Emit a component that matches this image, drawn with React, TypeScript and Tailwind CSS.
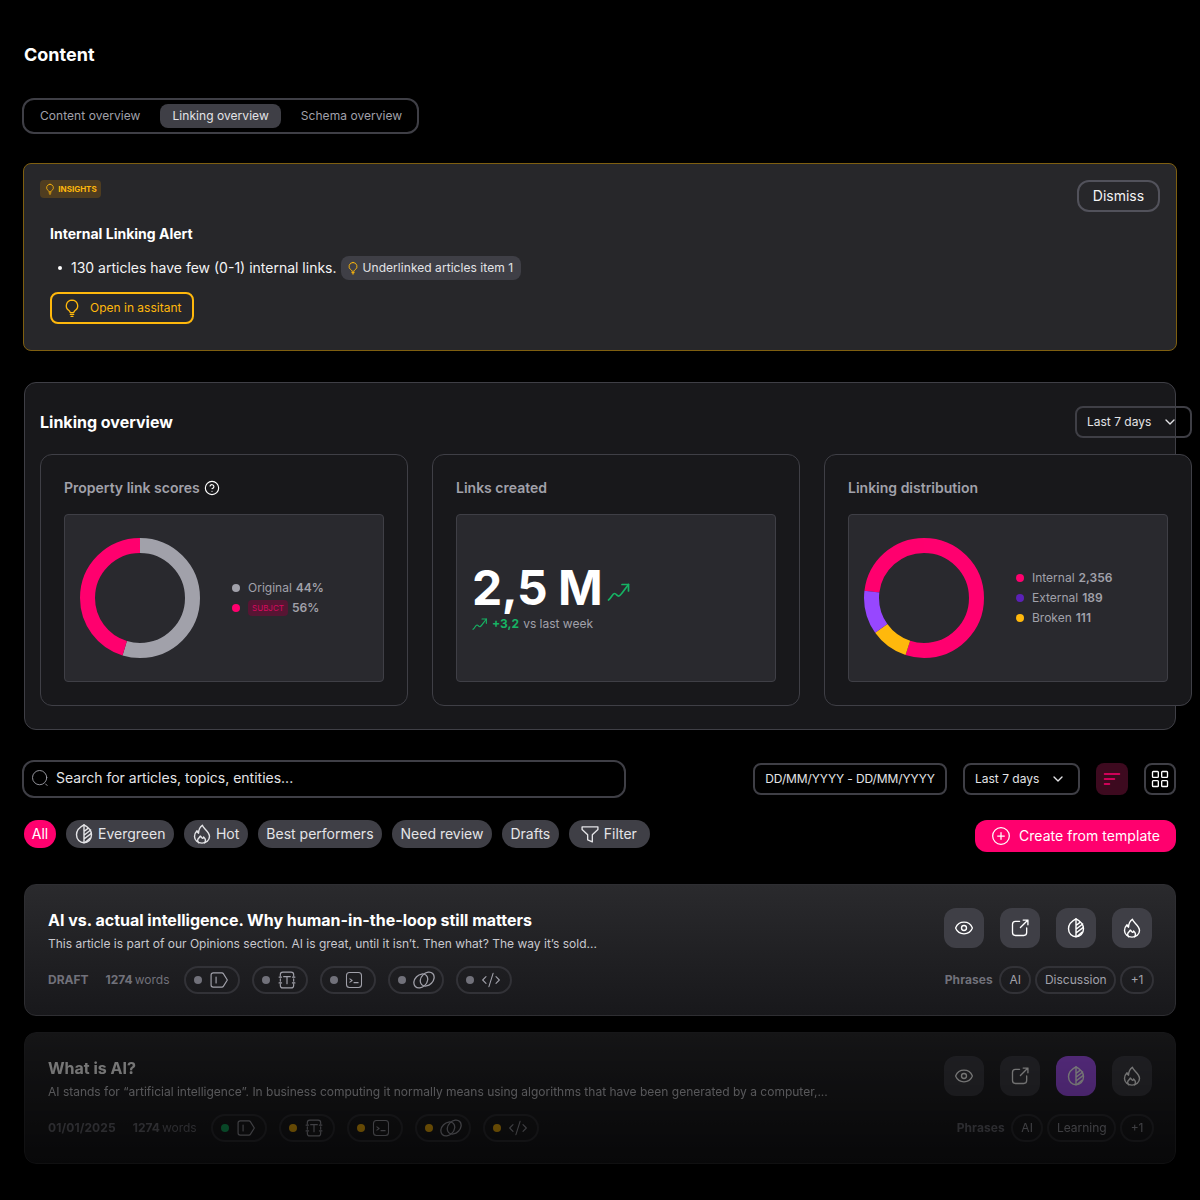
import { Eye, ChevronDown, CirclePlus, CircleHelp, LayoutGrid, CodeXml } from "lucide-react";

const Bulb = ({ className = "" }: { className?: string }) => (
  <svg viewBox="0 0 24 24" fill="none" stroke="currentColor" strokeWidth="1.6" strokeLinecap="round" strokeLinejoin="round" className={className}>
    <path d="M12 2.500a6.800 6.800 0 0 0-3.700 12.500c.9.7 1.300 1.400 1.600 2.500h4.200c.3-1.100.7-1.800 1.600-2.500A6.800 6.800 0 0 0 12 2.500z" />
    <path d="M10 19.700h4M10.800 22h2.400" />
  </svg>
);

const Leaf = ({ className = "" }: { className?: string }) => (
  <svg viewBox="0 0 24 24" fill="none" stroke="currentColor" strokeWidth="1.7" strokeLinecap="round" strokeLinejoin="round" className={className}>
    <path d="M12 1c5 2.500 9 7 9 12 0 5.500-4 9.500-9 9.500S3 18.500 3 13C3 8 7 3.500 12 1z" />
    <path d="M12 1v21.500M12 9l4.800-3.800M12 13.500l8-6.300M12 18l8.800-6.800M13.500 22l6-5" />
  </svg>
);

const Flame = ({ className = "" }: { className?: string }) => (
  <svg viewBox="0 0 24 24" fill="none" stroke="currentColor" strokeWidth="1.7" strokeLinecap="round" strokeLinejoin="round" className={className}>
    <path d="M12.500 1.500c.3 3.500 8.500 7.300 8.500 13.500a9 8 0 0 1-18 0c0-3 1.200-5.200 3-7 .2 1.500.8 2.300 1.800 3 .2-4 1.700-7.300 4.700-9.500z" />
    <path d="M8 22.500c-1.200-1.200-1.600-2.800-1-4.200.6-1.300 2-2 2.900-3.800 1.600 1 1.500 2.300 2.800 2.700.8-.2 1.200-.9 1.200-1.700 1.900 1.700 3 4.700 1.100 7" />
  </svg>
);

const External = ({ className = "" }: { className?: string }) => (
  <svg viewBox="0 0 24 24" fill="none" stroke="currentColor" strokeWidth="1.6" strokeLinecap="round" strokeLinejoin="round" className={className}>
    <path d="M11.500 4H6.500A3.500 3.500 0 0 0 3 7.500v10A3.500 3.500 0 0 0 6.500 21h10a3.500 3.500 0 0 0 3.500-3.500V12" />
    <path d="M12.500 11.500L21.500 2.500M15.800 2.500h5.700v5.700" />
  </svg>
);

const Trend = ({ className = "" }: { className?: string }) => (
  <svg viewBox="0 0 24 24" fill="none" stroke="currentColor" strokeWidth="1.7" strokeLinecap="round" strokeLinejoin="round" className={className}>
    <path d="M1.500 20c2.500-1.500 4-6.500 6-6.500s2.500 3 4.500 2.500 5-6 9.500-11.500" />
    <path d="M15 4.500h6.500V11" />
  </svg>
);

const Tag = ({ className = "" }: { className?: string }) => (
  <svg viewBox="0 0 24 24" fill="none" stroke="currentColor" strokeWidth="1.4" strokeLinecap="round" strokeLinejoin="round" className={className}>
    <path d="M5 3.500h10.500a2 2 0 0 1 1.700.9L22 12l-4.800 7.600a2 2 0 0 1-1.700.9H5A2.500 2.500 0 0 1 2.500 18V6A2.500 2.500 0 0 1 5 3.500z" />
    <path d="M8.500 8.500v7" />
  </svg>
);

const TextFrame = ({ className = "" }: { className?: string }) => (
  <svg viewBox="0 0 24 24" fill="none" stroke="currentColor" strokeWidth="1.4" strokeLinecap="round" strokeLinejoin="round" className={className}>
    <path d="M4 7V5.500A3 3 0 0 1 7 2.500h10a3 3 0 0 1 3 3V7M4 17v1.500a3 3 0 0 0 3 3h10a3 3 0 0 0 3-3V17M4 10.500v3M20 10.500v3M2.500 8.500h3M18.500 8.500h3M2.500 15.500h3M18.500 15.500h3" />
    <path d="M8 8h8M12 8v8.500" />
  </svg>
);

const Term = ({ className = "" }: { className?: string }) => (
  <svg viewBox="0 0 24 24" fill="none" stroke="currentColor" strokeWidth="1.4" strokeLinecap="round" strokeLinejoin="round" className={className}>
    <rect x="2" y="2" width="20" height="20" rx="4" />
    <path d="M6.500 10.500l3 2.200-3 2.200M12 15.500h5.500" />
  </svg>
);

const Rings = ({ className = "" }: { className?: string }) => (
  <svg viewBox="0 0 24 24" fill="none" stroke="currentColor" strokeWidth="1.4" className={className}>
    <ellipse cx="8.500" cy="13" rx="6.500" ry="8.500" transform="rotate(45 8.500 13)" />
    <ellipse cx="15.500" cy="11" rx="6.500" ry="8.500" transform="rotate(45 15.500 11)" />
  </svg>
);

const Sort = ({ className = "" }: { className?: string }) => (
  <svg viewBox="0 0 24 24" fill="none" stroke="currentColor" strokeWidth="1.800" strokeLinecap="round" className={className}>
    <path d="M3 6h18M3 12h12M3 18h6" />
  </svg>
);

const Funnel = ({ className = "" }: { className?: string }) => (
  <svg viewBox="0 0 24 24" fill="none" stroke="currentColor" strokeWidth="1.600" strokeLinecap="round" strokeLinejoin="round" className={className}>
    <path d="M2.500 3.500h19v3L14.800 13v8.500l-5.600-2.500v-6L2.500 6.500z" />
  </svg>
);

const Search = ({ className = "" }: { className?: string }) => (
  <svg viewBox="0 0 24 24" fill="none" stroke="currentColor" strokeWidth="1.200" strokeLinecap="round" className={className}>
    <circle cx="11.500" cy="11.500" r="9.500" />
    <path d="M19.500 20l2 2" />
  </svg>
);

const Donut = ({ segments }: { segments: { color: string; start: number; end: number }[] }) => (
  <svg viewBox="0 0 120 120" className="w-[120px] h-[120px] shrink-0">
    {segments.map((s) => (
      <circle
        key={s.color}
        cx="60"
        cy="60"
        r="52.500"
        fill="none"
        stroke={s.color}
        strokeWidth="15"
        pathLength={360}
        strokeDasharray={`${s.end - s.start} ${360 - (s.end - s.start)}`}
        strokeDashoffset={-s.start}
        transform="rotate(-90 60 60)"
      />
    ))}
  </svg>
);

const Dot = ({ className }: { className: string }) => <span className={`w-2 h-2 rounded-full shrink-0 ${className}`} />;

const Pill = ({ children, className = "px-[8.5px]" }: { children: React.ReactNode; className?: string }) => (
  <span className={`h-7 flex items-center gap-1 rounded-full bg-[#3f3f46] text-sm text-[#e4e4e7] ${className}`}>{children}</span>
);

const StatCard = ({ title, help, children }: { title: string; help?: boolean; children: React.ReactNode }) => (
  <div className="h-[252px] rounded-xl border border-[#3f3f46] bg-[#18181b] px-[23px] pt-[23px]">
    <div className="h-5 flex items-center gap-1 text-sm font-semibold text-[#a1a1aa]">
      {title}
      {help && <CircleHelp className="w-4 h-4 text-white" strokeWidth={1.7} />}
    </div>
    <div className="mt-4 h-[168px] rounded border border-[#3f3f46] bg-[#29292e] flex items-center px-[15px]">{children}</div>
  </div>
);

const LegendRow = ({ dot, label, value }: { dot: string; label: string; value: string }) => (
  <div className="h-3 flex items-center gap-2">
    <Dot className={dot} />
    <span className="flex items-center gap-1">
      {label} <b className="font-semibold">{value}</b>
    </span>
  </div>
);

const StatusChip = ({ dot, icon }: { dot: string; icon: React.ReactNode }) => (
  <span className="w-14 h-7 rounded-full border-2 border-[#323237] flex items-center gap-[7px] pl-2 text-[#a1a1aa]">
    <Dot className={dot} />
    {icon}
  </span>
);

const Phrase = ({ children, className }: { children: React.ReactNode; className: string }) => (
  <span className={`h-7 flex items-center rounded-full border-2 border-[#323237] text-xs text-[#a1a1aa] ${className}`}>{children}</span>
);

const ActionBtn = ({ children, className = "bg-[#3f3f46]" }: { children: React.ReactNode; className?: string }) => (
  <span className={`w-10 h-10 rounded-xl flex items-center justify-center text-white ${className}`}>{children}</span>
);

const ArticleCard = ({
  title, desc, meta, metaClass, dots, phrases, leafClass, faded,
}: {
  title: string; desc: string; meta: string; metaClass: string; dots: string[]; phrases: [string, string, string]; leafClass?: string; faded?: boolean;
}) => (
  <div className={`h-[132px] rounded-xl border border-[#2e2e32] bg-gradient-to-b from-[#2a2a2d] to-[#18181b] px-[23px] pt-[23px] ${faded ? "opacity-50 mt-4 [mask-image:linear-gradient(to_bottom,#000,rgba(0,0,0,0.7))]" : ""}`}>
    <div className="h-10 flex justify-between items-start">
      <div>
        <div className="text-base leading-6 font-bold text-white">{title}</div>
        <div className="mt-1 text-xs leading-4 text-[#c8c8ce]">{desc}</div>
      </div>
      <div className="flex gap-4">
        <ActionBtn><Eye className="w-5 h-5" strokeWidth={1.6} /></ActionBtn>
        <ActionBtn><External className="w-5 h-5" /></ActionBtn>
        <ActionBtn className={leafClass}><Leaf className="w-5 h-5" /></ActionBtn>
        <ActionBtn><Flame className="w-5 h-5" /></ActionBtn>
      </div>
    </div>
    <div className="mt-[18px] h-7 flex justify-between items-center">
      <div className="flex items-center">
        <span className={`text-xs font-bold text-[#71717a] ${metaClass}`}>{meta}</span>
        <span className="flex gap-[2px] text-xs text-[#71717a]"><b className="font-bold">1274</b> words</span>
        <div className="flex gap-3 ml-[14px]">
          <StatusChip dot={dots[0]} icon={<Tag className="w-5 h-5" />} />
          <StatusChip dot={dots[1]} icon={<TextFrame className="w-5 h-5" />} />
          <StatusChip dot={dots[2]} icon={<Term className="w-[18px] h-[18px]" />} />
          <StatusChip dot={dots[3]} icon={<Rings className="w-[22px] h-[22px]" />} />
          <StatusChip dot={dots[4]} icon={<CodeXml className="w-5 h-5" strokeWidth={1.3} />} />
        </div>
      </div>
      <div className="flex items-center gap-1 mr-[-2px]">
        <span className="mr-[2px] text-xs font-bold tracking-[0.1px] text-[#71717a]">Phrases</span>
        <Phrase className="px-[8.5px]">{phrases[0]}</Phrase>
        <Phrase className="px-[7.5px]">{phrases[1]}</Phrase>
        <Phrase className="px-[8.5px]">{phrases[2]}</Phrase>
      </div>
    </div>
  </div>
);

export default function App() {
  return (
    <div className="min-h-[1200px] bg-black px-6 pt-[41px] text-white [font-family:Inter,sans-serif]">
      <h1 className="text-lg leading-7 font-bold">Content</h1>

      <div className="-ml-0.5 mt-[29px] w-[397px] h-9 flex items-center gap-5 pl-4 rounded-xl border-2 border-[#3f3f46] text-xs tracking-[0.05px] text-[#a1a1aa]">
        <span className="h-6 flex items-center">Content overview</span>
        <span className="px-3 h-6 flex items-center rounded-lg bg-[#3f3f46] text-[#e4e4e7]">Linking overview</span>
        <span className="h-6 flex items-center">Schema overview</span>
      </div>

      <section className="-mx-px mt-[29px] h-[188px] rounded-lg border border-[#7f5f10] bg-[#27272a] px-4 pt-4 flex justify-between items-start">
        <div>
          <span className="w-[61px] h-[18px] flex items-center justify-center gap-[2px] rounded bg-[#4f3d20] text-[8px] font-bold text-[#ffb80c]">
            <Bulb className="w-3 h-3" /> INSIGHTS
          </span>
          <div className="ml-[10px] mt-[26px] text-sm leading-5 font-bold">Internal Linking Alert</div>
          <div className="ml-[10px] mt-[12px] h-6 flex items-center text-sm text-[#f4f4f5]">
            <span className="w-1 h-1 rounded-full bg-white ml-2 mr-[9px]" />
            130 articles have few (0-1) internal links.
            <span className="ml-1 h-6 pl-[5px] pr-2 flex items-center gap-[3px] rounded-lg bg-[#3f3f46] text-xs tracking-[0.05px] text-[#e4e4e7]">
              <Bulb className="w-[14px] h-[14px] text-[#ffb80c]" /> Underlinked articles item 1
            </span>
          </div>
          <button className="ml-[10px] mt-3 w-36 h-8 flex items-center gap-2 pl-[10px] rounded-lg border-2 border-[#ffb80c] text-xs text-[#ffb80c]">
            <Bulb className="w-5 h-5" /> Open in assitant
          </button>
        </div>
        <button className="w-[83px] h-8 rounded-xl border-2 border-[#52525b] text-sm text-[#f4f4f5]">Dismiss</button>
      </section>

      <section className="mt-[31px] h-[348px] rounded-xl border border-[#3f3f46] bg-[#18181b] pl-[15px] pt-[23px]">
        <div className="w-[1152px] h-8 flex justify-between items-center">
          <h2 className="text-base font-bold">Linking overview</h2>
          <span className="w-[117px] h-8 flex items-center gap-[11px] pl-[10px] rounded-lg border-2 border-[#3f3f46] text-xs text-[#e4e4e7]">
            Last 7 days <ChevronDown className="w-4 h-4" />
          </span>
        </div>
        <div className="mt-4 w-[1152px] grid grid-cols-[368px_368px_368px] gap-6">
          <StatCard title="Property link scores" help>
            <Donut segments={[{ color: "#a1a1aa", start: 0, end: 197 }, { color: "#ff006e", start: 197, end: 360 }]} />
            <div className="ml-8 flex flex-col gap-2 text-xs text-[#a1a1aa]">
              <LegendRow dot="bg-[#a1a1aa]" label="Original" value="44%" />
              <div className="h-3 flex items-center gap-2">
                <Dot className="bg-[#ff006e]" />
                <span className="flex items-center gap-1">
                  <span className="h-4 w-10 flex items-center justify-center rounded bg-[#571533] text-[8px] text-[#d60a5f]">SUBJCT</span>
                  <b className="font-semibold">56%</b>
                </span>
              </div>
            </div>
          </StatCard>
          <StatCard title="Links created">
            <div className="mb-[2px]">
              <div className="flex items-center leading-none">
                <span className="text-5xl leading-[50px] font-bold tracking-[-0.5px] text-white">2,5 M</span>
                <Trend className="ml-[5px] mt-2 w-6 h-6 text-[#16b364]" />
              </div>
              <div className="mt-[3px] flex items-center text-xs text-[#a1a1aa]">
                <Trend className="w-4 h-4 text-[#16b364]" />
                <b className="ml-1 font-bold text-[#16b364]">+3,2</b>
                <span className="ml-1">vs last week</span>
              </div>
            </div>
          </StatCard>
          <StatCard title="Linking distribution">
            <Donut segments={[{ color: "#ff006e", start: 277, end: 360 }, { color: "#ff006f", start: 0, end: 198 }, { color: "#ffb80c", start: 198, end: 234.5 }, { color: "#9747ff", start: 234.5, end: 277 }]} />
            <div className="ml-8 flex flex-col gap-2 text-xs text-[#a1a1aa]">
              <LegendRow dot="bg-[#ff006e]" label="Internal" value="2,356" />
              <LegendRow dot="bg-[#5b21b6]" label="External" value="189" />
              <LegendRow dot="bg-[#ffb80c]" label="Broken" value="111" />
            </div>
          </StatCard>
        </div>
      </section>

      <div className="mt-[30px] h-[38px] flex justify-between items-center">
        <div className="-ml-0.5 w-[604px] h-[38px] flex items-center gap-[7px] pl-[7px] pb-[2px] rounded-xl border-2 border-[#3f3f46] text-sm text-[#e4e4e7]">
          <Search className="w-[18px] h-[18px] text-[#a1a1aa]" /> Search for articles, topics, entities...
        </div>
        <div className="flex items-center gap-4">
          <span className="w-[194px] h-8 flex items-center justify-center rounded-lg border-2 border-[#3f3f46] text-xs tracking-[-0.1px] text-[#e4e4e7]">DD/MM/YYYY - DD/MM/YYYY</span>
          <span className="w-[117px] h-8 flex items-center gap-[11px] pl-[10px] rounded-lg border-2 border-[#3f3f46] text-xs text-[#e4e4e7]">
            Last 7 days <ChevronDown className="w-4 h-4" />
          </span>
          <span className="w-8 h-8 rounded-lg bg-[#3d0a1f] flex items-center justify-center text-[#ff006e]"><Sort className="w-5 h-5" /></span>
          <span className="w-8 h-8 rounded-lg border-2 border-[#3f3f46] flex items-center justify-center text-white"><LayoutGrid className="w-5 h-5" strokeWidth={1.6} /></span>
        </div>
      </div>

      <div className="mt-[22px] flex justify-between items-start">
        <div className="flex gap-[10px]">
          <span className="h-7 w-8 flex items-center justify-center rounded-full bg-[#ff006e] text-sm">All</span>
          <Pill className="pl-2 pr-[9px]"><Leaf className="w-5 h-5" /> Evergreen</Pill>
          <Pill className="pl-[7.5px] pr-[8.5px]"><Flame className="w-5 h-5" /> Hot</Pill>
          <Pill>Best performers</Pill>
          <Pill>Need review</Pill>
          <Pill>Drafts</Pill>
          <Pill className="pl-[11px] pr-[13px]"><Funnel className="w-5 h-5" /> Filter</Pill>
        </div>
        <button className="w-[201px] h-8 flex items-center justify-center gap-2 rounded-xl bg-[#ff006e] text-sm tracking-[0.05px] text-white">
          <CirclePlus className="w-5 h-5" strokeWidth={1.5} /> Create from template
        </button>
      </div>

      <div className="mt-8">
        <ArticleCard
          title="AI vs. actual intelligence. Why human-in-the-loop still matters"
          desc="This article is part of our Opinions section. AI is great, until it isn’t. Then what? The way it’s sold..."
          meta="DRAFT"
          metaClass="mr-[17px]"
          dots={["bg-[#71717a]", "bg-[#71717a]", "bg-[#71717a]", "bg-[#71717a]", "bg-[#71717a]"]}
          phrases={["AI", "Discussion", "+1"]}
        />
        <ArticleCard
          faded
          title="What is AI?"
          desc="AI stands for “artificial intelligence”. In business computing it normally means using algorithms that have been generated by a computer,..."
          meta="01/01/2025"
          metaClass="mr-[17px] tracking-[0.1px]"
          leafClass="bg-[#a855f7]"
          dots={["bg-[#16b364]", "bg-[#ffb80c]", "bg-[#ffb80c]", "bg-[#ffb80c]", "bg-[#ffb80c]"]}
          phrases={["AI", "Learning", "+1"]}
        />
      </div>
    </div>
  );
}
